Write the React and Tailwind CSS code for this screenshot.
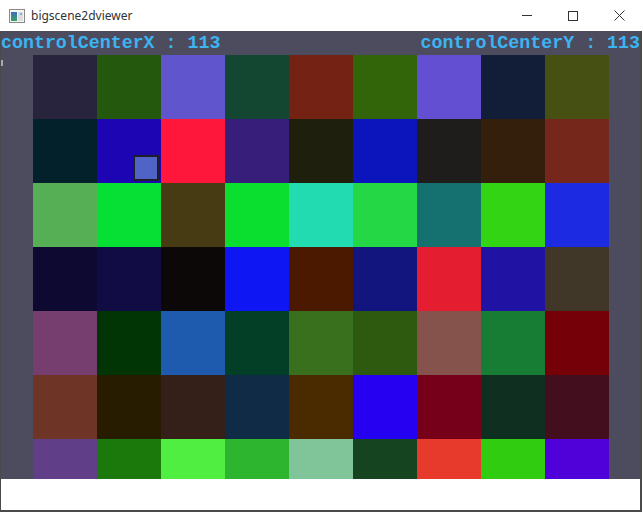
import React from "react";

const rows = [
  ["#29243e", "#24580c", "#6055cc", "#134732", "#742214", "#32640a", "#634fd2", "#121e38", "#465012"],
  ["#03212b", "#1d05b4", "#ff173b", "#371e7a", "#1e1f0d", "#0c14bc", "#1f1d1c", "#341e0c", "#76271c"],
  ["#56ae55", "#06e034", "#473b14", "#0ade2e", "#22dbb0", "#24d745", "#157070", "#32d414", "#1c2ae2"],
  ["#0e0930", "#120c44", "#0c0808", "#0e16f4", "#4a1900", "#13157e", "#e41e30", "#2013a4", "#403729"],
  ["#763e6e", "#023506", "#1e5bae", "#033f26", "#39701e", "#2d5a0f", "#86524c", "#187d34", "#760007"],
  ["#6e3426", "#271b00", "#341f19", "#102b45", "#4a2b00", "#2600f0", "#76001a", "#0f2f20", "#430f1f"],
  ["#603f88", "#1b780a", "#50ee40", "#2db52f", "#80c49a", "#154520", "#e73a2c", "#30cc10", "#5000d8"],
];

const AppIcon = () => (
  <svg width="16" height="14" viewBox="0 0 16 14">
    <defs>
      <linearGradient id="g" x1="0" y1="0" x2="0" y2="1">
        <stop offset="0" stopColor="#3a6fc0" />
        <stop offset="1" stopColor="#3aa060" />
      </linearGradient>
    </defs>
    <rect x="0.5" y="0.5" width="15" height="13" fill="#f4f4f4" stroke="#8a8a8a" />
    <rect x="2" y="3" width="6" height="9" fill="url(#g)" />
    <rect x="9" y="3" width="5" height="9" fill="#dcdcdc" />
    <rect x="11" y="4" width="2" height="2" fill="#7ab0d8" />
  </svg>
);

const TitleBar = () => (
  <div className="h-[31px] bg-white flex items-center" style={{ fontFamily: "'Noto Sans', sans-serif" }}>
    <div className="pl-[9px] pr-[6px] flex items-center">
      <AppIcon />
    </div>
    <span className="text-[12px] text-[#333]">bigscene2dviewer</span>
    <div className="ml-auto flex h-full">
      <div className="w-[46px] h-full flex items-center justify-center">
        <div className="w-[10px] h-px bg-[#333]" />
      </div>
      <div className="w-[46px] h-full flex items-center justify-center">
        <div className="w-[10px] h-[10px] border border-[#333]" />
      </div>
      <div className="w-[46px] h-full flex items-center justify-center">
        <svg width="11" height="11" viewBox="0 0 11 11">
          <path d="M0.5 0.5 L10.5 10.5 M10.5 0.5 L0.5 10.5" stroke="#333" strokeWidth="1" />
        </svg>
      </div>
    </div>
  </div>
);

export default function App() {
  return (
    <div className="w-[642px] h-[512px] flex flex-col bg-white overflow-hidden">
      <TitleBar />
      <div className="flex-1 flex flex-col border-l border-r-2 border-b-2 border-[#4a4a4a] min-h-0">
        <div className="flex-1 relative bg-[#4c4c5e] overflow-hidden min-h-0">
          <div
            className="h-[24px] flex justify-between items-center text-[18.3px] leading-[24px] font-bold text-[#3cb4f2]"
            style={{ fontFamily: "'Liberation Mono', monospace" }}
          >
            <span className="whitespace-pre">controlCenterX : 113</span>
            <span className="whitespace-pre">controlCenterY : 113</span>
          </div>
          <div className="absolute left-0 top-[29px] w-[2px] h-[6px] bg-[#a8a8b0]" />
          <div className="ml-[32px] grid grid-cols-[repeat(9,64px)]">
            {rows.map((row, r) =>
              row.map((c, i) => (
                <div key={r + "-" + i} className="relative h-[64px]" style={{ backgroundColor: c }}>
                  {r === 1 && i === 1 && (
                    <div className="absolute left-[36px] top-[36px] w-[26px] h-[26px] border-2 border-[#1e1e28] bg-[#5064c8]" />
                  )}
                </div>
              ))
            )}
          </div>
        </div>
        <div className="h-[31px] bg-white" />
      </div>
    </div>
  );
}
